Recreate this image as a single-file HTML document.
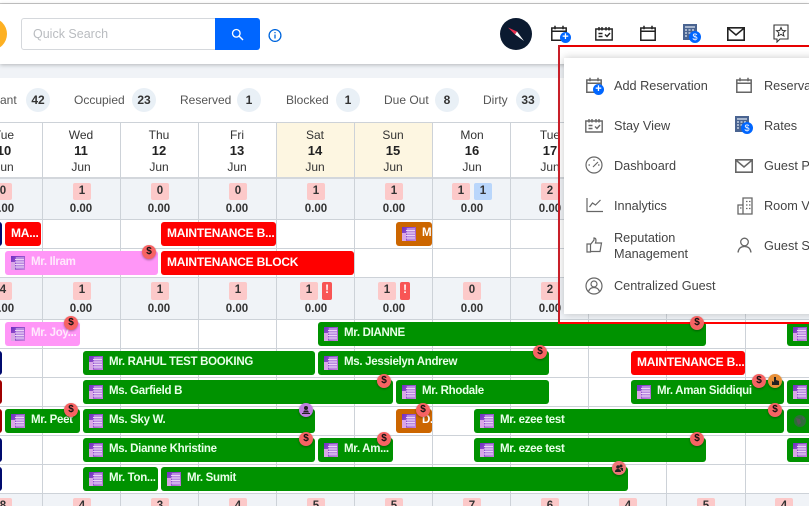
<!DOCTYPE html>
<html><head><meta charset="utf-8">
<style>
*{box-sizing:border-box}
html,body{margin:0;padding:0;width:809px;height:506px;overflow:hidden;background:#fff;font-family:"Liberation Sans",sans-serif}
#r{position:relative;width:809px;height:506px;overflow:hidden}
#r div,#r svg,#r span.a{position:absolute}
.v{width:1px;top:122px;height:384px;background:#cdd2d8}
.h{left:0;width:809px;height:1px;background:#cdd2d8}
.g{background:#f0f3f7;left:0;width:809px}
.d{top:127.500px;width:78px;text-align:center;color:#333;font-size:12px;line-height:15.500px}
.d b{font-size:13px;color:#222}
.s{width:18px;height:17px;background:#fcc9c9;border-radius:2px;font-size:11.500px;font-weight:bold;color:#333;text-align:center;line-height:17px}
.z{width:60px;text-align:center;font-size:11.500px;font-weight:bold;color:#333;line-height:13px}
.st{top:93px;font-size:12px;color:#555;line-height:14px;white-space:nowrap}
.c{top:88px;width:24px;height:24px;border-radius:50%;background:#e9f0f6;text-align:center;line-height:24px;font-size:12px;font-weight:bold;color:#333}
.bar{height:24px;border-radius:3px;color:#fff;font-size:11.500px;letter-spacing:-.3px;font-weight:bold;line-height:22px;white-space:nowrap;overflow:hidden;padding-left:26px}
.bar svg{left:6px;top:5px}
.gr{background:#009200;color:#e9ffe9}
.rd{background:#f00;padding-left:6px;font-size:12px;letter-spacing:-.2px}
.pk{background:#ff96f7;color:#ffe9fd}
.or{background:#cc6600}
.sl{left:-4px;width:6px;height:24px;border-radius:3px}
.b{width:14px;height:14px;border-radius:50%;background:#f76363;color:#111;font-size:10px;font-weight:bold;text-align:center;line-height:14px;box-shadow:0 1px 2px rgba(0,0,0,.35);z-index:8}
.m{color:#444;font-size:12.700px;line-height:16px;white-space:nowrap}
</style></head><body>
<svg width="0" height="0" style="position:absolute">
<defs>
<linearGradient id="pg" x1="0" y1="0" x2="1" y2="1"><stop offset="0" stop-color="#6f2fc0"/><stop offset="1" stop-color="#c77fdc"/></linearGradient>
<symbol id="bld" viewBox="0 0 14 14"><rect width="14" height="14" fill="url(#pg)"/><rect x="0" y="6" width="4" height="8" fill="#d9a6e6"/><rect x="4" y="1" width="9" height="12" fill="#8f4fd0"/><path d="M6 1v12M8 1v12M10 1v12M12 1v12M4 3.500h9M4 6h9M4 8.500h9M4 11h9" stroke="#ecd3f5" stroke-width=".9"/></symbol>
<symbol id="cal" viewBox="0 0 16 16"><path d="M.8 3h14.400v12.200H.8zM.8 6.300h14.400M4 .8v3.400M12 .8v3.400" fill="none" stroke="currentColor" stroke-width="1.500"/></symbol>
<symbol id="stay" viewBox="0 0 18 15"><path d="M.8 3h16.400v11H.8zM4 1v3.500M7 1v3.500M11 1v3.500M14 1v3.500M3.500 7.500h4M3.500 10.500h4M10 8.500l2 2 3-3.500" fill="none" stroke="currentColor" stroke-width="1.400"/></symbol>
<symbol id="mail" viewBox="0 0 18 14"><path d="M.8.8h16.400v12.400H.8zM1 1.200l8 6.800 8-6.800" fill="none" stroke="currentColor" stroke-width="1.600"/></symbol>
<symbol id="rates" viewBox="0 0 14 16"><rect width="14" height="16" fill="#4a6491"/><path d="M2 3h10M2 6h2M2 9h2M2 12h2M5.500 6h2M5.500 9h2M9 6h2" stroke="#dfe6f2" stroke-width="1.200"/></symbol>
</defs></svg>
<div id="r">
<div style="left:0;top:3px;width:809px;height:1px;background:#c9c9c9"></div>
<div style="left:0;top:64px;width:809px;height:14px;background:#f0f3f7"></div>
<div style="left:0;top:4px;width:809px;height:60px;background:#fff;box-shadow:0 1px 4px rgba(0,0,0,.25)"></div>
<div style="left:-25px;top:18px;width:32px;height:32px;border-radius:50%;background:#fdb022"></div>
<div style="left:21px;top:18px;width:195px;height:32px;border:1px solid #d5d8dc;border-radius:3px 0 0 3px;color:#b9bcc0;font-size:12.500px;line-height:30px;padding-left:11px">Quick Search</div>
<div style="left:215px;top:18px;width:45px;height:32px;background:#0066ff;border-radius:0 3px 3px 0"></div>
<svg style="left:231px;top:28px" width="13" height="13" viewBox="0 0 13 13"><circle cx="5.300" cy="5.300" r="3.800" fill="none" stroke="#fff" stroke-width="1.300"/><path d="M8 8l4 4" stroke="#fff" stroke-width="1.400"/></svg>
<svg style="left:268px;top:29px" width="14" height="13" viewBox="0 0 14 13"><circle cx="7" cy="6.500" r="5.900" fill="none" stroke="#0066dd" stroke-width="1.300"/><path d="M7 5.500v4M7 3v1.300" stroke="#0066dd" stroke-width="1.300"/></svg>
<svg style="left:500px;top:18px" width="32" height="32" viewBox="0 0 32 32"><circle cx="16" cy="16" r="16" fill="#0b1a30"/><path d="M8 9.500l9 4-2 3z" fill="#e8304f"/><path d="M17 13.500l7 9.500-9-6.500z" fill="#fff"/></svg>
<svg style="left:551px;top:25px;color:#222" width="16" height="16"><use href="#cal"/></svg>
<div style="left:560px;top:32px;width:11px;height:11px;border-radius:50%;background:#0066ff;color:#fff;font-size:11px;font-weight:bold;line-height:10px;text-align:center">+</div>
<svg style="left:595px;top:26px;color:#222" width="18" height="15"><use href="#stay"/></svg>
<svg style="left:640px;top:25px;color:#222" width="16" height="16"><use href="#cal"/></svg>
<svg style="left:683px;top:24px" width="14" height="16"><use href="#rates"/></svg>
<div style="left:689px;top:31px;width:12px;height:12px;border-radius:50%;background:#0066ff;color:#fff;font-size:9px;line-height:12px;text-align:center">$</div>
<svg style="left:727px;top:27px;color:#222" width="18" height="14"><use href="#mail"/></svg>
<svg style="left:773px;top:24px" width="16" height="19" viewBox="0 0 16 19"><path d="M1 1h14v14H7l-3 3v-3H1z" fill="none" stroke="#333" stroke-width="1.100"/><path d="M8 3.500l1.300 3 3.200.2-2.400 2.100.8 3.200L8 10.300 5.100 12l.8-3.200-2.400-2.100 3.200-.2z" fill="none" stroke="#333" stroke-width="1"/></svg>
<div class="st" style="left:0">ant</div><div class="c" style="left:26px">42</div>
<div class="st" style="left:74px">Occupied</div><div class="c" style="left:132px">23</div>
<div class="st" style="left:180px">Reserved</div><div class="c" style="left:237px">1</div>
<div class="st" style="left:286px">Blocked</div><div class="c" style="left:336px">1</div>
<div class="st" style="left:384px">Due Out</div><div class="c" style="left:435px">8</div>
<div class="st" style="left:483px">Dirty</div><div class="c" style="left:516px">33</div>
<div style="left:277px;top:122px;width:155px;height:55px;background:#fdf6e1"></div>
<div class="g" style="top:179px;height:40px"></div>
<div class="g" style="top:277px;height:42px"></div>
<div class="g" style="top:493px;height:13px"></div>
<div class="h" style="top:122px"></div>
<div class="h" style="top:177px;height:2px;background:#d3d7dc"></div>
<div class="h" style="top:219px"></div><div class="h" style="top:248px"></div><div class="h" style="top:277px"></div>
<div class="h" style="top:319px"></div><div class="h" style="top:348px"></div><div class="h" style="top:377px"></div>
<div class="h" style="top:406px"></div><div class="h" style="top:435px"></div><div class="h" style="top:464px"></div><div class="h" style="top:493px"></div>
<div class="v" style="left:42px"></div><div class="v" style="left:120px"></div><div class="v" style="left:198px"></div><div class="v" style="left:276px"></div><div class="v" style="left:354px"></div><div class="v" style="left:432px"></div><div class="v" style="left:510px"></div><div class="v" style="left:588px"></div><div class="v" style="left:666px"></div><div class="v" style="left:745px"></div>
<div class="d" style="left:-35px">Tue<br><b>10</b><br>Jun</div>
<div class="d" style="left:42px">Wed<br><b>11</b><br>Jun</div>
<div class="d" style="left:120px">Thu<br><b>12</b><br>Jun</div>
<div class="d" style="left:198px">Fri<br><b>13</b><br>Jun</div>
<div class="d" style="left:276px">Sat<br><b>14</b><br>Jun</div>
<div class="d" style="left:354px">Sun<br><b>15</b><br>Jun</div>
<div class="d" style="left:433px">Mon<br><b>16</b><br>Jun</div>
<div class="d" style="left:511px">Tue<br><b>17</b><br>Jun</div>
<div class="s" style="left:-6px;top:183px">0</div><div class="s" style="left:73px;top:183px">1</div><div class="s" style="left:151px;top:183px">0</div><div class="s" style="left:229px;top:183px">0</div><div class="s" style="left:307px;top:183px">1</div><div class="s" style="left:385px;top:183px">1</div><div class="s" style="left:452px;top:183px">1</div><div class="s" style="left:474px;top:183px;background:#b9d6fb">1</div><div class="s" style="left:541px;top:183px">2</div>
<div class="z" style="left:-27px;top:203px">0.00</div><div class="z" style="left:51px;top:203px">0.00</div><div class="z" style="left:129px;top:203px">0.00</div><div class="z" style="left:207px;top:203px">0.00</div><div class="z" style="left:286px;top:203px">0.00</div><div class="z" style="left:364px;top:203px">0.00</div><div class="z" style="left:442px;top:203px">0.00</div><div class="z" style="left:520px;top:203px">0.00</div>
<div class="s" style="left:-6px;top:282px;height:18px">4</div><div class="s" style="left:73px;top:282px;height:18px">1</div><div class="s" style="left:151px;top:282px;height:18px">1</div><div class="s" style="left:229px;top:282px;height:18px">1</div><div class="s" style="left:300px;top:282px;height:18px">1</div><div class="s" style="left:322px;top:282px;height:18px;width:10px;background:#f85555;color:#fff">!</div><div class="s" style="left:378px;top:282px;height:18px">1</div><div class="s" style="left:400px;top:282px;height:18px;width:10px;background:#f85555;color:#fff">!</div><div class="s" style="left:463px;top:282px;height:18px">0</div><div class="s" style="left:541px;top:282px;height:18px">2</div>
<div class="z" style="left:-27px;top:303px">0.00</div><div class="z" style="left:51px;top:303px">0.00</div><div class="z" style="left:129px;top:303px">0.00</div><div class="z" style="left:207px;top:303px">0.00</div><div class="z" style="left:286px;top:303px">0.00</div><div class="z" style="left:364px;top:303px">0.00</div><div class="z" style="left:442px;top:303px">0.00</div><div class="z" style="left:520px;top:303px">0.00</div>
<div class="s" style="left:-6px;top:498px">8</div><div class="s" style="left:73px;top:498px">4</div><div class="s" style="left:151px;top:498px">3</div><div class="s" style="left:229px;top:498px">4</div><div class="s" style="left:307px;top:498px">5</div><div class="s" style="left:385px;top:498px">5</div><div class="s" style="left:463px;top:498px">7</div><div class="s" style="left:541px;top:498px">6</div><div class="s" style="left:619px;top:498px">4</div><div class="s" style="left:697px;top:498px">5</div><div class="s" style="left:775px;top:498px">4</div>
<div class="sl" style="top:222px;background:#000a6e"></div><div class="sl" style="top:351px;background:#000a6e"></div><div class="sl" style="top:380px;background:#a00000"></div><div class="sl" style="top:409px;background:#a00000"></div><div class="sl" style="top:438px;background:#000a6e"></div><div class="sl" style="top:467px;background:#000a6e"></div>
<div class="bar rd" style="left:5px;top:222px;width:36px">MA...</div>
<div class="bar rd" style="left:161px;top:222px;width:115px">MAINTENANCE B...</div>
<div class="bar or" style="left:396px;top:222px;width:36px"><svg width="14" height="14"><use href="#bld"/></svg>M</div>
<div class="bar pk" style="left:5px;top:251px;width:153px"><svg width="14" height="14"><use href="#bld"/></svg>Mr. Ilram</div>
<div class="bar rd" style="left:161px;top:251px;width:193px">MAINTENANCE BLOCK</div>
<div class="bar pk" style="left:5px;top:322px;width:75px"><svg width="14" height="14"><use href="#bld"/></svg>Mr. Joy...</div>
<div class="bar gr" style="left:318px;top:322px;width:388px"><svg width="14" height="14"><use href="#bld"/></svg>Mr. DIANNE</div>
<div class="bar gr" style="left:787px;top:322px;width:30px"><svg width="14" height="14"><use href="#bld"/></svg></div>
<div class="bar gr" style="left:83px;top:351px;width:232px"><svg width="14" height="14"><use href="#bld"/></svg>Mr. RAHUL TEST BOOKING</div>
<div class="bar gr" style="left:318px;top:351px;width:231px"><svg width="14" height="14"><use href="#bld"/></svg>Ms. Jessielyn Andrew</div>
<div class="bar rd" style="left:631px;top:351px;width:114px">MAINTENANCE B...</div>
<div class="bar gr" style="left:83px;top:380px;width:310px"><svg width="14" height="14"><use href="#bld"/></svg>Ms. Garfield B</div>
<div class="bar gr" style="left:396px;top:380px;width:153px"><svg width="14" height="14"><use href="#bld"/></svg>Mr. Rhodale</div>
<div class="bar gr" style="left:631px;top:380px;width:153px"><svg width="14" height="14"><use href="#bld"/></svg>Mr. Aman Siddiqui</div>
<div class="bar gr" style="left:787px;top:380px;width:30px"><svg width="14" height="14"><use href="#bld"/></svg></div>
<div class="bar gr" style="left:5px;top:409px;width:75px"><svg width="14" height="14"><use href="#bld"/></svg>Mr. Peet</div>
<div class="bar gr" style="left:83px;top:409px;width:232px"><svg width="14" height="14"><use href="#bld"/></svg>Ms. Sky W.</div>
<div class="bar or" style="left:396px;top:409px;width:36px"><svg width="14" height="14"><use href="#bld"/></svg>D.</div>
<div class="bar gr" style="left:474px;top:409px;width:310px"><svg width="14" height="14"><use href="#bld"/></svg>Mr. ezee test</div>
<div class="bar gr" style="left:787px;top:409px;width:30px"><svg width="14" height="14" viewBox="0 0 14 14"><circle cx="7" cy="7" r="6" fill="#2f6b3a"/><path d="M3 4l4 1 1 4-3 2zM9 2l3 3-2 1z" fill="#555"/></svg></div>
<div class="bar gr" style="left:83px;top:438px;width:232px"><svg width="14" height="14"><use href="#bld"/></svg>Ms. Dianne Khristine</div>
<div class="bar gr" style="left:318px;top:438px;width:75px"><svg width="14" height="14"><use href="#bld"/></svg>Mr. Am...</div>
<div class="bar gr" style="left:474px;top:438px;width:232px"><svg width="14" height="14"><use href="#bld"/></svg>Mr. ezee test</div>
<div class="bar gr" style="left:787px;top:438px;width:30px"><svg width="14" height="14"><use href="#bld"/></svg></div>
<div class="bar gr" style="left:83px;top:467px;width:75px"><svg width="14" height="14"><use href="#bld"/></svg>Mr. Ton...</div>
<div class="bar gr" style="left:161px;top:467px;width:467px"><svg width="14" height="14"><use href="#bld"/></svg>Mr. Sumit</div>
<div style="left:564px;top:58px;width:260px;height:256px;background:#fff;box-shadow:0 0 8px rgba(0,0,0,.22);z-index:5"></div>
<div style="left:559px;top:47px;width:260px;height:11px;background:rgba(255,255,255,.85);z-index:4"></div>
<div style="left:558px;top:45px;width:270px;height:2px;background:#e60000;z-index:6"></div>
<div style="left:558px;top:45px;width:2px;height:279px;background:#c81e28;z-index:6"></div>
<div style="left:558px;top:322px;width:270px;height:2px;background:#f00;z-index:6"></div>
<div style="left:0;top:0;width:809px;height:506px;z-index:7">
<svg style="left:586px;top:77px;color:#666" width="16" height="16"><use href="#cal"/></svg>
<div style="left:593px;top:84px;width:11px;height:11px;border-radius:50%;background:#0066ff;color:#fff;font-size:11px;font-weight:bold;line-height:10px;text-align:center">+</div>
<svg style="left:585px;top:118px;color:#666" width="18" height="15"><use href="#stay"/></svg>
<svg style="left:585px;top:156px" width="18" height="18" viewBox="0 0 18 18"><circle cx="9" cy="9" r="8" fill="none" stroke="#666" stroke-width="1.200"/><path d="M8 11l5-5M3.500 9h1.500M9 3.500V5M13 9h1.500" stroke="#666" stroke-width="1.200" fill="none"/></svg>
<svg style="left:586px;top:197px" width="17" height="16" viewBox="0 0 17 16"><path d="M1 1v13.500h16M3.500 10l3-4 3 2 5-5" fill="none" stroke="#666" stroke-width="1.200"/></svg>
<svg style="left:586px;top:237px" width="17" height="16" viewBox="0 0 17 16"><path d="M1 7h3.500v8H1zM4.500 7.500L8 3V1c2 0 2.500 2 1.500 5h6L14 14.500H4.500" fill="none" stroke="#666" stroke-width="1.200"/></svg>
<svg style="left:585px;top:277px" width="18" height="18" viewBox="0 0 18 18"><circle cx="9" cy="9" r="8" fill="none" stroke="#666" stroke-width="1.200"/><circle cx="9" cy="7" r="3" fill="none" stroke="#666" stroke-width="1.200"/><path d="M3.500 14.500c1-3 3-4 5.500-4s4.500 1 5.500 4" fill="none" stroke="#666" stroke-width="1.200"/></svg>
<svg style="left:736px;top:77px;color:#666" width="16" height="16"><use href="#cal"/></svg>
<svg style="left:735px;top:116px" width="14" height="16"><use href="#rates"/></svg>
<div style="left:741px;top:122px;width:12px;height:12px;border-radius:50%;background:#0066ff;color:#fff;font-size:9px;line-height:12px;text-align:center">$</div>
<svg style="left:735px;top:159px;color:#666" width="18" height="14"><use href="#mail"/></svg>
<svg style="left:737px;top:197px" width="16" height="18" viewBox="0 0 16 18"><path d="M1 17V8h5V1h9v16zM6 8v9M9 4.500h1.500M12 4.500h1.500M9 8h1.500M12 8h1.500M9 11.500h1.500M12 11.500h1.500M3 11h1.500" fill="none" stroke="#666" stroke-width="1.300"/></svg>
<svg style="left:737px;top:237px" width="15" height="16" viewBox="0 0 15 16"><circle cx="7.500" cy="5" r="3.800" fill="none" stroke="#666" stroke-width="1.300"/><path d="M1 15.500c.5-4 3-6 6.500-6s6 2 6.500 6" fill="none" stroke="#666" stroke-width="1.300"/></svg>
<div class="m" style="left:614px;top:78px">Add Reservation</div>
<div class="m" style="left:614px;top:118px">Stay View</div>
<div class="m" style="left:614px;top:158px">Dashboard</div>
<div class="m" style="left:614px;top:198px">Innalytics</div>
<div class="m" style="left:614px;top:230px">Reputation<br>Management</div>
<div class="m" style="left:614px;top:278px">Centralized Guest</div>
<div class="m" style="left:764px;top:78px">Reservation</div>
<div class="m" style="left:764px;top:118px">Rates</div>
<div class="m" style="left:764px;top:158px">Guest Profile</div>
<div class="m" style="left:764px;top:198px">Room View</div>
<div class="m" style="left:764px;top:238px">Guest Stay</div>
</div>
<div class="b" style="left:142px;top:245px">$</div>
<div class="b" style="left:64px;top:316px">$</div>
<div class="b" style="left:690px;top:316px">$</div>
<div class="b" style="left:533px;top:345px">$</div>
<div class="b" style="left:377px;top:374px">$</div>
<div class="b" style="left:752px;top:374px">$</div>
<div class="b" style="left:768px;top:374px;background:#e8913a"><svg style="left:3px;top:3px" width="8" height="8" viewBox="0 0 8 8"><path d="M1 8V4l2 1V0h2v3l3 1v4z" fill="#222"/></svg></div>
<div class="b" style="left:64px;top:403px">$</div>
<div class="b" style="left:299px;top:403px;background:#c07ee0"><svg style="left:3px;top:3px" width="8" height="8" viewBox="0 0 8 8"><circle cx="4" cy="2" r="2" fill="#222"/><path d="M2 4.500h4l1 2H1zM0 7h8v1H0z" fill="#222"/></svg></div>
<div class="b" style="left:416px;top:403px">$</div>
<div class="b" style="left:768px;top:403px">$</div>
<div class="b" style="left:299px;top:432px">$</div>
<div class="b" style="left:377px;top:432px">$</div>
<div class="b" style="left:690px;top:432px">$</div>
<div class="b" style="left:612px;top:461px;background:#ee7777"><svg style="left:3px;top:3px" width="8" height="8" viewBox="0 0 8 8"><circle cx="3" cy="3" r="1.800" fill="#222"/><circle cx="6" cy="2" r="1.500" fill="#222"/><path d="M0 8c0-2 1-3 3-3s3 1 3 3zM5 4h3v3H7z" fill="#222"/></svg></div>
</div>
</body></html>
